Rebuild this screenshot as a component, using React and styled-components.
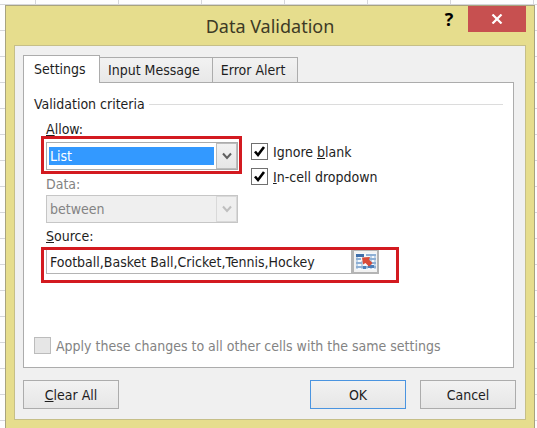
import { useState } from "react";
import styled, { createGlobalStyle, css } from "styled-components";

const GlobalStyle = createGlobalStyle`
    * {
        box-sizing: border-box;
    }

    body {
        margin: 0;
        color: #1e1e1e;
        font-family: "DejaVu Sans Condensed", "Noto Sans", sans-serif;
        font-size: 14px;
        line-height: 16px;
    }

    button, input, select {
        margin: 0;
        color: inherit;
        font: inherit;
    }
`

const Sheet = styled.main`
    display: flex;
    min-height: 100vh;
    padding: 5px 2px 0 5px;
    background:
        repeating-linear-gradient(to right, transparent 0 82px, #d5d6db 82px 83px) -47px 0 / 200% 100% no-repeat,
        repeating-linear-gradient(to bottom, transparent 0 25px, #d5d6db 25px 26px) 0 -21px / 100% 200% no-repeat,
        #fdfdfe;
`

const Dialog = styled.section`
    display: flex;
    flex-direction: column;
    flex: 1;
    padding: 0 8px 9px;
    border: 1px solid #a8a37f;
    border-bottom: 0;
    background: #e6dd8d;
`

const TitleBar = styled.header`
    display: grid;
    grid-template-columns: 1fr auto 1fr;
    height: 39px;
`

const Title = styled.h1`
    grid-column: 2;
    margin: 0;
    color: #3d3a25;
    font-family: "Noto Sans", "Open Sans", sans-serif;
    font-size: 18px;
    font-weight: 400;
    line-height: 40px;
`

const WindowButtons = styled.div`
    display: flex;
    align-items: flex-start;
    justify-content: flex-end;
`

const WindowButton = styled.button`
    display: flex;
    align-items: center;
    justify-content: center;
    width: ${props => props.$close ? "58px" : "38px"};
    height: 26px;
    padding: 0;
    border: 0;
    background: ${props => props.$close ? "#c75050" : "transparent"};
    color: ${props => props.$close ? "white" : "black"};
    font-family: "Open Sans", sans-serif;
    font-size: 18px;
    font-weight: 700;
`

const Client = styled.div`
    display: flex;
    flex-direction: column;
    flex: 1;
    padding: 9px 9px 10px 8px;
    border: 1px solid #c6bf88;
    background: #f0f0f0;
`

const Tabs = styled.div`
    display: flex;
    align-items: flex-end;
    height: 27px;
`

const Tab = styled.button`
    height: 25px;
    padding: 0 12px 0 8px;
    border: 1px solid #acacac;
    border-left-width: 0;
    border-bottom: 0;
    background: linear-gradient(#f2f2f2, #e8e8e8);
    white-space: nowrap;

    ${props => props.$active && css`
        width: 77px;
        height: 27px;
        padding: 0 10px;
        border-left-width: 1px;
        background: white;
        text-align: left;
    `}
`

const Panel = styled.div`
    display: flex;
    flex-direction: column;
    margin-right: 2px;
    padding: 14px 10px 13px;
    border: 1px solid #acacac;
    border-top: 0;
    background:
        linear-gradient(#acacac, #acacac) 75px 0 / 100% 1px no-repeat,
        white;
`

const Criteria = styled.fieldset`
    min-width: 0;
    margin: 0;
    padding: 0;
    border: 0;
`

const Legend = styled.legend`
    display: flex;
    align-items: center;
    gap: 4px;
    width: 100%;
    padding: 0;

    &::after {
        content: "";
        flex: 1;
        height: 1px;
        background: #dcdcdc;
    }
`

const Fields = styled.div`
    display: flex;
    flex-direction: column;
    padding: 10px 0 0 7px;
`

const TopFields = styled.div`
    display: flex;
    gap: 9px;
`

const Column = styled.div`
    display: flex;
    flex-direction: column;
`

const FieldLabel = styled.label`
    align-self: flex-start;
    height: 14px;
    margin: ${props => props.$gap || "0"} 0 ${props => props.$gap ? "4px" : "0"} 5px;
    line-height: 14px;
    color: ${props => props.$disabled ? "#838383" : "inherit"};
`

const Highlight = styled.div`
    display: flex;
    width: ${props => props.$wide ? "358px" : "201px"};
    max-width: 100%;
    padding: ${props => props.$wide ? "0 17px 6px 2px" : "3px 1px 1px 2px"};
    border: 3px solid #d31a20;
`

const Combo = styled.div`
    position: relative;
    width: 192px;
    margin-left: ${props => props.$indent ? "5px" : "0"};
`

const Select = styled.select`
    display: block;
    width: 100%;
    height: 28px;
    padding: 0 26px 0 3px;
    border: 1px solid #acacac;
    border-radius: 0;
    appearance: none;
    background: linear-gradient(#3399ff, #3399ff) 2px 4px / calc(100% - 25px) 18px no-repeat, white;
    color: white;

    &:disabled {
        border-color: #c6c6c6;
        background: #efefef;
        color: #838383;
        opacity: 1;
    }
`

const ComboArrow = styled.span`
    position: absolute;
    top: 1px;
    right: 1px;
    bottom: 1px;
    display: flex;
    align-items: center;
    justify-content: center;
    width: 21px;
    border: 1px solid ${props => props.$disabled ? "#d9d9d9" : "#bcbcbc"};
    background: ${props => props.$disabled ? "#efefef" : "linear-gradient(#f2f2f2, #e6e6e6)"};
    color: ${props => props.$disabled ? "#bfbfbf" : "#606060"};
    pointer-events: none;
`

const Checks = styled.div`
    display: flex;
    flex-direction: column;
    gap: 8px;
    padding-top: 21px;
`

const CheckLabel = styled.label`
    display: flex;
    align-items: center;
    gap: 5px;
    height: 17px;
    white-space: nowrap;
    color: ${props => props.$disabled ? "#838383" : "inherit"};
`

const CheckBox = styled.input`
    width: 17px;
    height: 17px;
    border: 1px solid #707070;
    appearance: none;
    background: white;

    &:disabled {
        border-color: #bcbcbc;
        background: #e6e6e6;
    }
`

const CheckFace = styled.span`
    display: grid;

    > * {
        grid-area: 1 / 1;
    }

    > svg {
        pointer-events: none;
    }
`

const SourceInput = styled.input`
    flex: 1;
    min-width: 0;
    height: 24px;
    padding: 0 3px;
    border: 1px solid #b4b4b4;
    border-top: 0;
    background: white;
`

const RangeButton = styled.button`
    display: flex;
    align-items: center;
    justify-content: center;
    width: 27px;
    height: 24px;
    padding: 0;
    border: 2px solid #b4b4b4;
    border-top-width: 1px;
    background: #f2f2f2;
`

const ApplyRow = styled.div`
    display: flex;
    margin-top: 54px;
`

const Actions = styled.footer`
    display: flex;
    gap: 14px;
    margin-top: 12px;
`

const ActionButton = styled.button`
    width: 96px;
    height: 29px;
    margin-right: ${props => props.$first ? "auto" : "0"};
    padding: 0;
    border: 1px solid ${props => props.$primary ? "#4a94e0" : "#acacac"};
    background: linear-gradient(#f2f2f2, #e6e6e6);
`

const ComboBox = ({ id, value, indent, disabled }) => (
    <Combo $indent={indent}>
        <Select id={id} defaultValue={value} disabled={disabled}>
            <option>{value}</option>
        </Select>
        <ComboArrow $disabled={disabled}>
            <svg width="10" height="8" viewBox="0 0 10 8" fill="none" stroke="currentColor" strokeWidth="2">
                <path d="M1 1.5 L5 6 L9 1.5" />
            </svg>
        </ComboArrow>
    </Combo>
)

const Check = ({ checked: initial = false, disabled, children }) => {
    const [checked, setChecked] = useState(initial)
    return (
        <CheckLabel $disabled={disabled}>
            <CheckFace>
                <CheckBox type="checkbox" checked={checked} disabled={disabled} onChange={() => setChecked(!checked)} />
                {checked && (
                    <svg width="17" height="17" viewBox="0 0 17 17" fill="none" stroke="black" strokeWidth="2.6">
                        <path d="M4 8.5 L7 12 L13 4" />
                    </svg>
                )}
            </CheckFace>
            <span>{children}</span>
        </CheckLabel>
    )
}

const RangeIcon = () => (
    <svg width="20" height="17" viewBox="0 0 20 17">
        <rect width="20" height="17" fill="#f4f8fc" />
        <path d="M0 1h8v3H0z" fill="#3f6fab" />
        <path d="M10 2h10M0 6h5M12 6h8M0 10h6M14 10h6M0 14h20" stroke="#6e98c8" strokeWidth="1.5" />
        <path d="M1 4v12M6 8v8M11 13v3M15 1v15M19 3v13" stroke="#8caed2" strokeWidth="1" />
        <path d="M7 13h3v3H7zM12 12h6v3h-6z" fill="#4d7eb8" />
        <path d="M6 4.5 L14 4 L13 6.5 L16.5 10 L13 13.5 L9.5 10 L7 11.5z" fill="#d94a38" />
    </svg>
)

export default function App() {
    return (
        <>
            <GlobalStyle />
            <Sheet>
                <Dialog role="dialog" aria-labelledby="title">
                    <TitleBar>
                        <Title id="title">Data Validation</Title>
                        <WindowButtons>
                            <WindowButton aria-label="Help">?</WindowButton>
                            <WindowButton $close aria-label="Close">
                                <svg width="12" height="10" viewBox="0 0 12 10" stroke="white" strokeWidth="2.2">
                                    <path d="M1.5 0.5 L10.5 9.5 M10.5 0.5 L1.5 9.5" />
                                </svg>
                            </WindowButton>
                        </WindowButtons>
                    </TitleBar>
                    <Client>
                        <Tabs role="tablist">
                            <Tab role="tab" aria-selected="true" $active>Settings</Tab>
                            <Tab role="tab" aria-selected="false">Input Message</Tab>
                            <Tab role="tab" aria-selected="false">Error Alert</Tab>
                        </Tabs>
                        <Panel role="tabpanel">
                            <Criteria>
                                <Legend>Validation criteria</Legend>
                                <Fields>
                                    <TopFields>
                                        <Column>
                                            <FieldLabel htmlFor="allow"><u>A</u>llow:</FieldLabel>
                                            <Highlight>
                                                <ComboBox id="allow" value="List" />
                                            </Highlight>
                                            <FieldLabel htmlFor="data" $gap="3px" $disabled>Data:</FieldLabel>
                                            <ComboBox id="data" value="between" indent disabled />
                                        </Column>
                                        <Checks>
                                            <Check checked>Ignore <u>b</u>lank</Check>
                                            <Check checked><u>I</u>n-cell dropdown</Check>
                                        </Checks>
                                    </TopFields>
                                    <FieldLabel htmlFor="source" $gap="6px"><u>S</u>ource:</FieldLabel>
                                    <Highlight $wide>
                                        <SourceInput id="source" defaultValue="Football,Basket Ball,Cricket,Tennis,Hockey" />
                                        <RangeButton aria-label="Select range"><RangeIcon /></RangeButton>
                                    </Highlight>
                                </Fields>
                            </Criteria>
                            <ApplyRow>
                                <Check disabled>Apply these changes to all other cells with the same settings</Check>
                            </ApplyRow>
                        </Panel>
                        <Actions>
                            <ActionButton $first><u>C</u>lear All</ActionButton>
                            <ActionButton $primary>OK</ActionButton>
                            <ActionButton>Cancel</ActionButton>
                        </Actions>
                    </Client>
                </Dialog>
            </Sheet>
        </>
    )
}
